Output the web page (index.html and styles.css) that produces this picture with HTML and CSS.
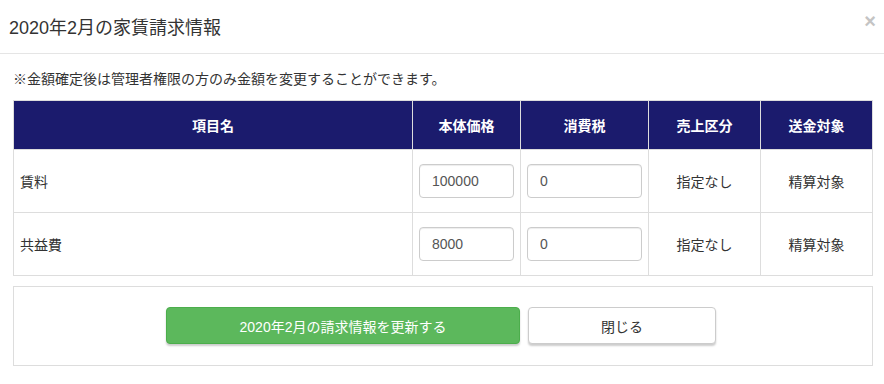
FILE: index.html
```html
<!DOCTYPE html>
<html lang="ja">

<head>
	<meta charset="UTF-8">
	<meta name="viewport" content="width=device-width, initial-scale=1.0">
	<title>2020年2月の家賃請求情報</title>
	<link rel="stylesheet" href="styles.css">
</head>

<body>

	<div class="modal">
		<div class="modal-header">
			<h4 class="modal-title">2020年2月の家賃請求情報</h4>
			<span class="close">&times;</span>
		</div>

		<div class="modal-body">
			<p class="note">※金額確定後は管理者権限の方のみ金額を変更することができます。</p>

			<table class="bill-table">
				<thead>
					<tr>
						<th class="col-name">項目名</th>
						<th class="col-price">本体価格</th>
						<th class="col-tax">消費税</th>
						<th class="col-type">売上区分</th>
						<th class="col-target">送金対象</th>
					</tr>
				</thead>
				<tbody>
					<tr>
						<td class="item-name">賃料</td>
						<td><input type="text" class="form-control" value="100000"></td>
						<td><input type="text" class="form-control" value="0"></td>
						<td class="center">指定なし</td>
						<td class="center">精算対象</td>
					</tr>
					<tr>
						<td class="item-name">共益費</td>
						<td><input type="text" class="form-control" value="8000"></td>
						<td><input type="text" class="form-control" value="0"></td>
						<td class="center">指定なし</td>
						<td class="center">精算対象</td>
					</tr>
				</tbody>
			</table>

			<div class="actions">
				<button type="button" class="btn btn-update">2020年2月の請求情報を更新する</button>
				<button type="button" class="btn btn-close">閉じる</button>
			</div>
		</div>
	</div>

</body>

</html>
```

FILE: styles.css
```css
/* modal layout */
body {
	font-family: "Liberation Sans", Arial, "Noto Sans CJK JP", sans-serif;
	color: #333;
	margin: 0;
	background: #fff;
}

.modal {
	width: 884px;
}

.modal-header {
	display: flex;
	justify-content: space-between;
	align-items: center;
	height: 53px;
	padding: 0 8px 0 9px;
	border-bottom: 1px solid #e5e5e5;
}

.modal-title {
	margin: 0;
	font-size: 18px;
	font-weight: normal;
	padding-bottom: 2px;
}

.close {
	color: #c4c4c4;
	font-size: 20px;
	font-weight: bold;
	line-height: 1;
	margin-top: -12px;
}

.modal-body {
	padding: 15px 11px 0 13px;
}

.note {
	margin: 0 0 11px;
	font-size: 14px;
	line-height: 20px;
}

.bill-table {
	width: 860px;
	border-collapse: collapse;
	font-size: 14px;
}

.bill-table th {
	background-color: #1b1b6d;
	color: #fff;
	height: 48px;
	padding: 0;
	font-size: 14px;
	font-weight: bold;
	border: 1px solid #ddd;
	border-bottom: none;
}

.bill-table td {
	height: 62px;
	padding: 0 6px;
	border: 1px solid #ddd;
}

.col-name { width: 398px; }
.col-price { width: 107px; }
.col-tax { width: 127px; }
.col-type { width: 111px; }

.item-name {
	padding-left: 7px;
}

.center {
	text-align: center;
}

.form-control {
	box-sizing: border-box;
	width: 100%;
	height: 34px;
	padding: 6px 12px;
	font-family: inherit;
	font-size: 14px;
	color: #555;
	border: 1px solid #ccc;
	border-radius: 4px;
	box-shadow: inset 0 1px 1px rgba(0, 0, 0, .075);
}

.actions {
	display: flex;
	justify-content: center;
	align-items: flex-start;
	gap: 8px;
	margin-top: 10px;
	width: 858px;
	height: 78px;
	border: 1px solid #ddd;
}

.btn {
	margin-top: 20px;
	height: 37px;
	font-family: inherit;
	font-size: 14px;
	border-radius: 4px;
	cursor: pointer;
	box-shadow: 0 2px 2px rgba(0, 0, 0, .2);
}

.btn-update {
	width: 354px;
	background-color: #5cb85c;
	border: 1px solid #4cae4c;
	color: #fff;
	margin-left: -4px;
}

.btn-close {
	width: 188px;
	background-color: #fff;
	border: 1px solid #ccc;
	color: #333;
}
```
